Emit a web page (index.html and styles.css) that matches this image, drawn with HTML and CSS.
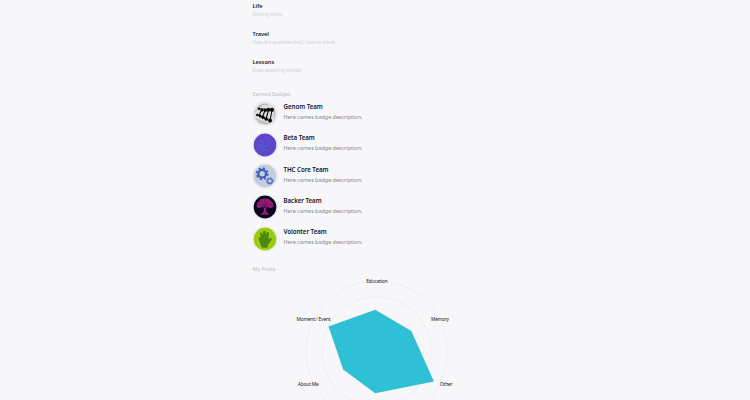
FILE: index.html
```html
<!DOCTYPE html>
<html lang="en">
<head>
<meta charset="utf-8">
<title>Profile</title>
<link rel="stylesheet" href="styles.css">
</head>
<body>
<main class="profile">
  <section class="topics">
    <article class="topic"><h3>Life</h3><p>Getting there.</p></article>
    <article class="topic"><h3>Travel</h3><p>Hate the airplanes bro!!. Love to travel.</p></article>
    <article class="topic"><h3>Lessons</h3><p>Does swearing counts?</p></article>
  </section>
  <h2 class="heading">Earned Badges</h2>
  <section class="badges">
    <article class="badge">
      <svg class="icon" viewBox="0 0 24 24"><circle cx="12" cy="12" r="11.3" fill="#dcdcdc"/><g fill="none" stroke="#a0a0a0" stroke-width=".7"><path d="M4 6Q9 1 15 2.5M2 10Q5 5 9 4M3 17Q8 20 13 20M5 19Q12 24 18 20M20 6Q23 10 21 15"/></g><g stroke="#111" stroke-width="1.1"><path d="M8.5 8L6 13.5M12 8.5L9.5 15M15.5 8L13 17M19 8L17 19"/><path d="M6 6.5L19 8M3.5 12.5L17 19" stroke-width=".9"/></g><g fill="#080808"><circle cx="6" cy="6.8" r="1.2"/><circle cx="9" cy="8" r="1.6"/><circle cx="12.3" cy="8.2" r="1.7"/><circle cx="15.5" cy="7.7" r="2"/><circle cx="19" cy="7.8" r="2.1"/><circle cx="4.4" cy="13" r="1.3"/><circle cx="7.2" cy="14" r="1.5"/><circle cx="10" cy="15.3" r="1.7"/><circle cx="13.2" cy="17" r="1.8"/><circle cx="17" cy="18.5" r="2"/></g></svg>
      <div class="info"><h3>Genom Team</h3><p>Here comes badge description.</p></div>
    </article>
    <article class="badge">
      <svg class="icon" viewBox="0 0 24 24"><circle cx="12" cy="12" r="11.4" fill="#6046cb"/><g fill="none" stroke="#4078c8" stroke-width="1" opacity=".75"><path d="M6 16L10 12L13 14L18 8M7 8L11 10M13 5L15 8M9 19L12 16L16 18M5 12L8 12"/></g></svg>
      <div class="info"><h3>Beta Team</h3><p>Here comes badge description.</p></div>
    </article>
    <article class="badge">
      <svg class="icon" viewBox="0 0 24 24"><circle cx="12" cy="12" r="11.4" fill="#c2cde0"/><g fill="none" stroke="#3c5fb9"><circle cx="9.2" cy="9.7" r="3.8" stroke-width="2.2"/><circle cx="9.2" cy="9.7" r="5.5" stroke-width="1.8" stroke-dasharray="2.16 2.16"/><circle cx="16.9" cy="17" r="2.4" stroke="#5273c6" stroke-width="1.4"/><circle cx="16.9" cy="17" r="3.4" stroke="#5273c6" stroke-width="1" stroke-dasharray="1.335 1.335"/></g></svg>
      <div class="info"><h3>THC Core Team</h3><p>Here comes badge description.</p></div>
    </article>
    <article class="badge">
      <svg class="icon" viewBox="0 0 24 24"><circle cx="12" cy="12" r="11.4" fill="#0b0720"/><path d="M4 12Q2.8 8 6.2 6.2Q7.5 3.6 12 3.5Q16.5 3.6 17.8 6.2Q21.2 8 20 12Q18 14 16 12.2Q14 11 13 13.5Q13 18 17 20Q12 19 7 20Q11 18 11 13.5Q10 11 8 12.2Q6 14 4 12Z" fill="#9b1c78"/><path d="M5 10Q9 8 12 13Q15 8 19 10M8 6Q11 8 12 13Q13 8 16 6M12 4V13" fill="none" stroke="#3e0b45" stroke-width=".5"/></svg>
      <div class="info"><h3>Backer Team</h3><p>Here comes badge description.</p></div>
    </article>
    <article class="badge">
      <svg class="icon" viewBox="0 0 24 24"><circle cx="12" cy="12" r="11.4" fill="#9ccb12"/><path d="M8.6 20.2L7.4 17L5.6 11.5Q5.6 9.8 7 10.3L7.8 11L7 6.4Q7.6 4.9 9 6L9.9 8.4L10.2 4.2Q11.3 3 12.4 4.2L12.8 8L14 5Q15.4 4.5 15.8 6L15.6 12.2L18 11Q19.4 11.3 18.6 12.9L15.2 17.3L14.6 20.2Q11.5 21.5 8.6 20.2Z" fill="#4d8610"/></svg>
      <div class="info"><h3>Volonter Team</h3><p>Here comes badge description.</p></div>
    </article>
  </section>
  <h2 class="heading posts">My Posts</h2>
  <svg class="radar" viewBox="252 276 246 124">
    <g class="rings"><circle cx="376.7" cy="351.5" r="70.7"/><circle cx="376.7" cy="351.5" r="54.7"/></g>
    <path class="area" d="M375.2 309.8L411.4 331L433.9 381.5L375.2 393.3L343.2 369.5L328.5 326.6Z"/>
    <g class="labels">
      <text x="366.3" y="283.2" textLength="21.5">Education</text>
      <text x="431" y="321.3" textLength="18">Memory</text>
      <text x="440" y="386" textLength="12.5">Other</text>
      <text x="296.5" y="321.3" textLength="34">Moment / Event</text>
      <text x="297.8" y="386" textLength="21">About Me</text>
    </g>
  </svg>
</main>
</body>
</html>
```
FILE: styles.css
```css
* { box-sizing: border-box; }
body {
  margin: 0;
  height: 400px;
  overflow: hidden;
  background: #f7f7fa;
  font-family: "Noto Sans", "Open Sans", sans-serif;
}
h2, h3, p { margin: 0; }
.profile { width: 246px; margin-left: 252px; padding-top: 2px; }
.topic { height: 28px; padding-left: .5px; white-space: nowrap; }
.topic h3 { font-size: 5.7px; line-height: 8px; font-weight: 600; letter-spacing: -.04px; color: #1c1c22; }
.topic p { font-size: 4.7px; line-height: 8px; letter-spacing: -.04px; color: #cecfd5; }
.heading { height: 8px; margin-top: 4px; padding-left: .5px; font-size: 5.4px; line-height: 8px; font-weight: 500; letter-spacing: -.04px; color: #c5c6ce; }
.badges { padding-top: 3px; }
.badge { display: flex; height: 31.25px; gap: 6.5px; }
.icon { flex: none; width: 24px; height: 24px; margin: .5px 0 0 1px; border-radius: 50%; box-shadow: 0 0 1.5px #c8c9d0; }
.info h3 { margin-top: 1px; font-size: 6.2px; line-height: 9px; font-weight: 600; letter-spacing: -.05px; color: #15151c; }
.info p { margin-top: 2px; font-size: 5.5px; line-height: 8px; letter-spacing: -.05px; color: #85868c; white-space: nowrap; }
.posts { margin-top: 7.5px; }
.radar { display: block; width: 246px; height: 124px; margin-top: 3px; }
.rings { fill: none; stroke: #ebecef; stroke-width: .9; }
.area { fill: #30c0d5; }
.labels { font-size: 4.8px; fill: #202026; }
```
